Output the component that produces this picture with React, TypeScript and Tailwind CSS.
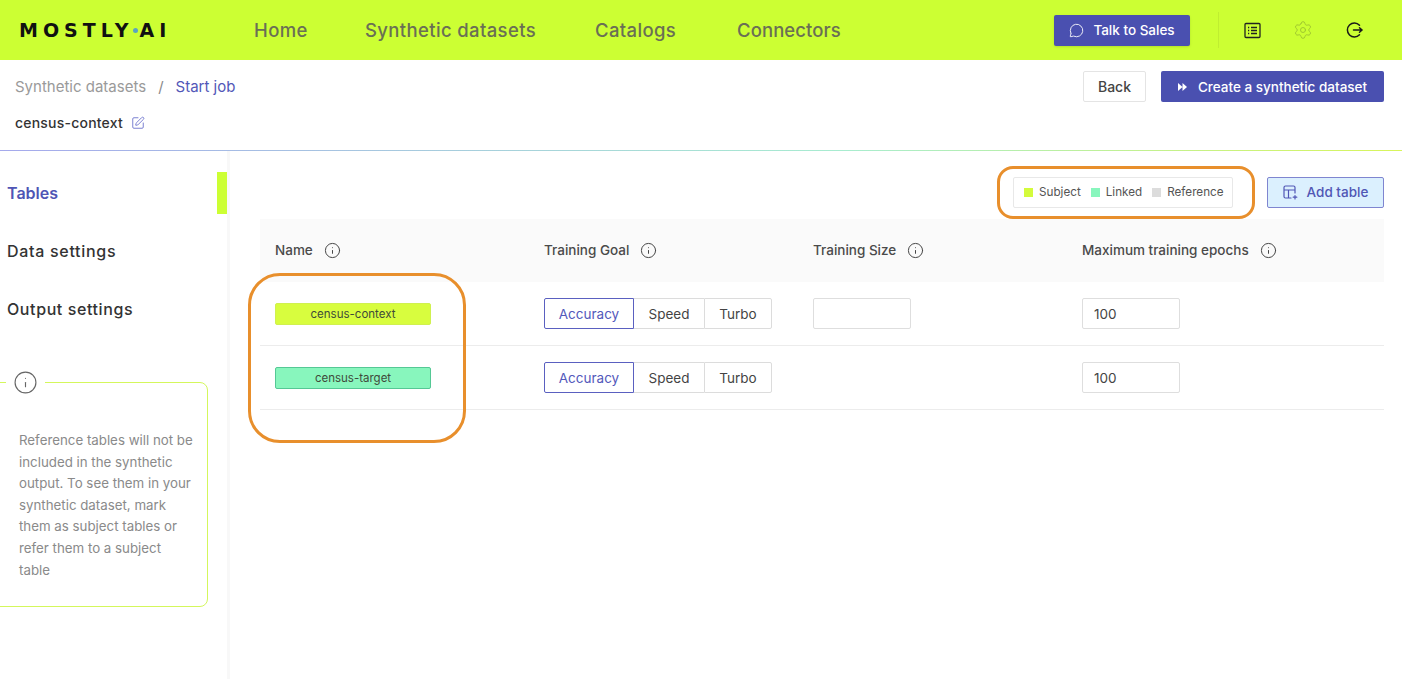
import { MessageCircle, Settings, Info, SquarePen } from "lucide-react";

function Head({ label, gap = "gap-[11px]" }: { label: string; gap?: string }) {
  return (
    <div className={`flex items-center ${gap} text-[13.5px] font-medium text-[#4a4a4a]`}>
      <span>{label}</span>
      <Info size={17} strokeWidth={1.4} className="text-[#444]" />
    </div>
  );
}

function Goal() {
  return (
    <div className="flex h-[31px] text-[13.5px] text-[#444]">
      <div className="flex w-[90px] items-center justify-center rounded-l-[2px] border border-[#5a60c0] pt-px text-[#5359bb]">Accuracy</div>
      <div className="flex w-[70px] items-center justify-center border-y border-[#dcdcdc] pt-px">Speed</div>
      <div className="flex w-[68px] items-center justify-center rounded-r-[2px] border border-[#dcdcdc] pt-px">Turbo</div>
    </div>
  );
}

function Num({ value }: { value?: string }) {
  return (
    <div className="flex h-[31px] w-[98px] items-center rounded-[2px] border border-[#dedede] pl-[11px] pt-px text-[13.5px] text-[#444]">
      {value}
    </div>
  );
}

function Row({ name, color, border, size }: { name: string; color: string; border: string; size: boolean }) {
  return (
    <div className="grid h-[64px] grid-cols-[269px_269px_269px_1fr] items-center border-b border-[#ececec] pl-[15px]">
      <div className={`flex h-[22px] w-[156px] items-center justify-center rounded-[2px] border pt-[2px] text-[11.5px] text-[#3f4a3a] ${color} ${border}`}>
        {name}
      </div>
      <Goal />
      <div>{size && <Num />}</div>
      <Num value="100" />
    </div>
  );
}

function Legend({ color, label }: { color: string; label: string }) {
  return (
    <div className="flex items-center gap-[6px]">
      <span className={`h-[9px] w-[9px] ${color}`} />
      <span>{label}</span>
    </div>
  );
}

export default function App() {
  return (
    <div className="relative flex h-[679px] w-[1402px] flex-col overflow-hidden bg-white font-['Inter',sans-serif]">
      <header className="flex h-[60px] shrink-0 items-center bg-[#ccff33] pl-[19px] pr-[38px]">
        <div className="flex w-[235px] items-center whitespace-nowrap font-['DejaVu_Sans',sans-serif] text-[19px] font-bold leading-none tracking-[5px] text-[#111]">
          <span>MOSTLY</span>
          <span className="ml-[-1px] mr-[2px] h-[5px] w-[5px] rounded-full bg-[#5aa5c0]" />
          <span>AI</span>
        </div>
        <nav className="mt-[2px] flex gap-[59px] whitespace-nowrap text-[18.5px] font-medium tracking-[0.02em] text-[#6a6f55]">
          <span className="w-[52px]">Home</span>
          <span className="w-[171px]">Synthetic datasets</span>
          <span className="w-[83px]">Catalogs</span>
          <span className="w-[104px] tracking-[0.005em]">Connectors</span>
        </nav>
        <div className="ml-auto flex items-center">
          <button className="flex h-[31px] w-[136px] items-center justify-center gap-[9px] rounded-[2px] bg-[#4a50b0] text-[13.5px] font-medium text-white shadow-sm">
            <MessageCircle size={15} strokeWidth={1.4} />
            Talk to Sales
          </button>
          <div className="ml-[28px] mr-[25px] h-[36px] w-px bg-[#bfee30]" />
          <svg width="17" height="17" viewBox="0 0 17 17" fill="none" stroke="#222" strokeWidth="1.3">
            <rect x="1" y="1.5" width="15" height="14" rx="1" />
            <path d="M7 5.500h6M7 8.500h6M7 11.500h6M4 5.500h1.200M4 8.500h1.200M4 11.500h1.200" />
          </svg>
          <Settings size={20} strokeWidth={1.2} className="ml-[32px] text-[#a0c830]" />
          <svg width="20" height="20" viewBox="0 0 20 20" fill="none" stroke="#1a1a1a" strokeWidth="1.5" strokeLinecap="round" className="ml-[31px]">
            <path d="M15.500 5.200A7 7 0 1 0 15.500 14.800" />
            <path d="M9.500 10H18M15.500 7.800 18 10l-2.500 2.200" />
          </svg>
        </div>
      </header>

      <div className="flex h-[90px] shrink-0 justify-between pl-[15px] pr-[18px]">
        <div>
          <div className="mt-[17px] flex items-center text-[15px] leading-5">
            <span className="text-[#9a9a9a]">Synthetic datasets</span>
            <span className="mx-[12px] text-[#8a8a8a]">/</span>
            <span className="text-[#5257b8]">Start job</span>
          </div>
          <div className="mt-[15px] flex items-center gap-[8px] text-[14px] font-medium tracking-[0.015em] text-[#333]">
            census-context
            <SquarePen size={14} strokeWidth={1.4} className="text-[#5f66c8]" />
          </div>
        </div>
        <div className="mt-[11px] flex gap-[15px]">
          <button className="h-[31px] w-[63px] rounded-[2px] border border-[#e4e4e4] text-[14px] font-medium text-[#444]">Back</button>
          <button className="flex h-[31px] w-[223px] items-center justify-center gap-[11px] rounded-[2px] bg-[#4a50b0] pt-px text-[13.5px] font-medium text-white">
            <svg width="9" height="8" viewBox="0 0 9 8" fill="currentColor"><path d="M0 0l4.500 4L0 8zM4.500 0 9 4 4.500 8z" /></svg>
            Create a synthetic dataset
          </button>
        </div>
      </div>

      <div className="h-px shrink-0 bg-[linear-gradient(to_right,#a5a9ec,#a8ecd0_60%,#d8f55a)]" />

      <div className="flex min-h-0 flex-1">
        <aside className="relative w-[230px] shrink-0 border-r-[3px] border-[#f8f8f8] pt-[21px]">
          <div className="relative flex h-[42px] items-center pl-[7px] text-[16px] font-semibold text-[#4f55b5]">
            Tables
            <span className="absolute right-0 top-0 h-[42px] w-[10px] bg-[#ccff33]" />
          </div>
          <div className="mt-[16px] flex h-[42px] items-center pl-[7px] text-[16px] font-medium tracking-[0.7px] text-[#333]">Data settings</div>
          <div className="mt-[16px] flex h-[42px] items-center pl-[7px] text-[16px] font-medium tracking-[0.6px] text-[#333]">Output settings</div>
          <div className="relative ml-[-10px] mt-[52px] w-[218px] rounded-[8px] border-[1.5px] border-[#d4f75c] pb-[25px] pl-[28px] pr-[12px] pt-[47px] text-[13.3px] leading-[21.6px] text-[#8a8a8a]">
            <div className="absolute left-[15px] top-[-13px] flex h-[24px] w-[39px] items-center justify-center bg-white">
              <Info size={25} strokeWidth={1.1} className="text-[#666]" />
            </div>
            Reference tables will not be included in the synthetic output. To see them in your synthetic dataset, mark them as subject tables or refer them to a subject table
          </div>
        </aside>

        <main className="min-w-0 flex-1 pl-[30px] pr-[18px] pt-[26px]">
          <div className="flex h-[31px] items-center justify-end">
            <div className="flex h-[31px] w-[220px] items-center gap-[10px] rounded-[2px] border border-[#e8e8e8] pl-[10px] text-[11.7px] text-[#555]">
              <Legend color="bg-[#d4fb3c]" label="Subject" />
              <Legend color="bg-[#88f6bd]" label="Linked" />
              <Legend color="bg-[#dcdcdc]" label="Reference" />
            </div>
            <button className="ml-[34px] flex h-[31px] w-[117px] items-center justify-center gap-[9px] rounded-[2px] border border-[#7f85d0] bg-[#dbf0fe] text-[13.5px] font-medium text-[#5056b5]">
              <svg width="15" height="15" viewBox="0 0 15 15" fill="none" stroke="currentColor" strokeWidth="1.2" strokeLinecap="round">
                <path d="M8 13H2.500A1.500 1.500 0 0 1 1 11.500V2.500A1.500 1.500 0 0 1 2.500 1h8A1.500 1.500 0 0 1 12 2.500V8M1 5h11M5.500 5v8M12 10.500v3.500M10.200 12.200h3.600" />
              </svg>
              Add table
            </button>
          </div>

          <div className="mt-[11px] grid h-[63px] grid-cols-[269px_269px_269px_1fr] items-center bg-[#fafafa] pl-[15px]">
            <Head label="Name" />
            <Head label="Training Goal" />
            <Head label="Training Size" />
            <Head label="Maximum training epochs" />
          </div>
          <Row name="census-context" color="bg-[#d8fd3e]" border="border-[#d0f050]" size />
          <Row name="census-target" color="bg-[#88f6bd]" border="border-[#55c895]" size={false} />
        </main>
      </div>

      <div className="absolute left-[248px] top-[273px] h-[170px] w-[218px] rounded-[32px] border-[3px] border-[#e88f2c]" />
      <div className="absolute left-[997px] top-[166px] h-[53px] w-[258px] rounded-[16px] border-[3px] border-[#e88f2c]" />
    </div>
  );
}
